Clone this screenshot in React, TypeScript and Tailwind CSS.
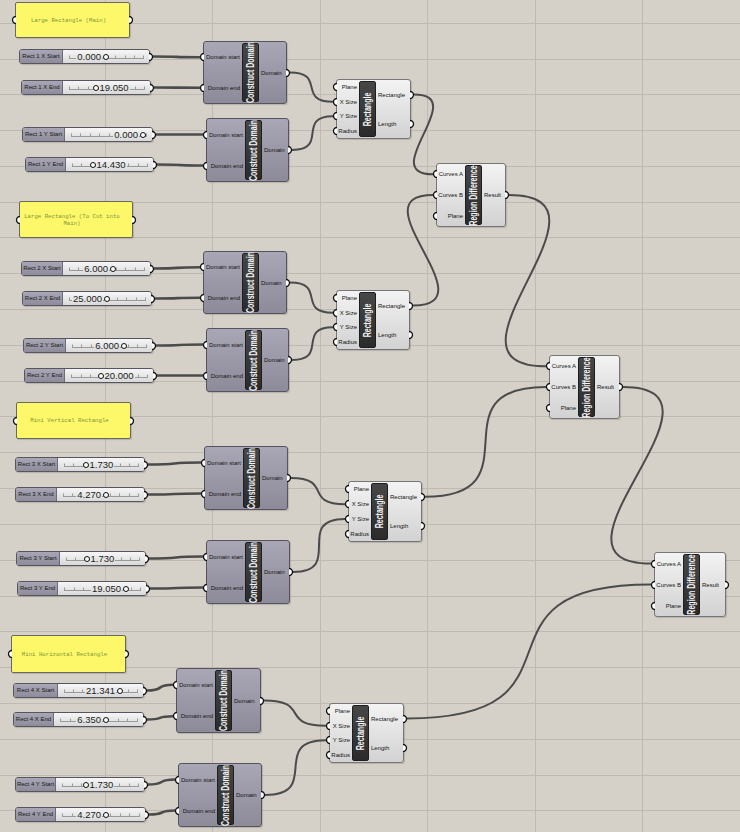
import { clsx } from "clsx"

type Kind = "cd" | "rect" | "rd"

type Comp = { id: string; kind: Kind; x: number; y: number; w: number; h: number }

type Slider = {
  id: string
  label: string
  value: string
  x: number
  y: number
  w: number
  lw: number
  knob: number
  side: "L" | "R"
}

type Panel = { x: number; y: number; w: number; h: number; lines: string[] }

const KINDS: Record<Kind, { name: string; inputs: string[]; outputs: string[]; inCol: string; body: string }> = {
  cd: {
    name: "Construct Domain",
    inputs: ["Domain start", "Domain end"],
    outputs: ["Domain"],
    inCol: "w-[38px]",
    body: "border-[#55535d] bg-gradient-to-b from-[#a9a7b5] to-[#8d8b99]",
  },
  rect: {
    name: "Rectangle",
    inputs: ["Plane", "X Size", "Y Size", "Radius"],
    outputs: ["Rectangle", "Length"],
    inCol: "w-[22px]",
    body: "border-[#767676] bg-gradient-to-b from-[#f3f3f3] to-[#d2d2d2]",
  },
  rd: {
    name: "Region Difference",
    inputs: ["Curves A", "Curves B", "Plane"],
    outputs: ["Result"],
    inCol: "w-[28px]",
    body: "border-[#767676] bg-gradient-to-b from-[#f3f3f3] to-[#d2d2d2]",
  },
}

const PANELS: Panel[] = [
  { x: 15, y: 2, w: 115, h: 36, lines: ["Large Rectangle (Main)"] },
  { x: 19, y: 201, w: 114, h: 37, lines: ["Large Rectangle (To Cut into", "Main)"] },
  { x: 16, y: 402, w: 115, h: 37, lines: ["Mini Vertical Rectangle"] },
  { x: 11, y: 635, w: 115, h: 38, lines: ["Mini Horizontal Rectangle"] },
]

const SLIDERS: Slider[] = [
  { id: "s1", label: "Rect 1 X Start", value: "0.000", x: 19, y: 49, w: 131, lw: 43, knob: 106, side: "L" },
  { id: "s2", label: "Rect 1 X End", value: "19.050", x: 21, y: 80, w: 130, lw: 41, knob: 96, side: "R" },
  { id: "s3", label: "Rect 1 Y Start", value: "0.000", x: 22, y: 127, w: 131, lw: 42, knob: 143, side: "L" },
  { id: "s4", label: "Rect 1 Y End", value: "14.430", x: 25, y: 157, w: 129, lw: 40, knob: 93, side: "R" },
  { id: "s5", label: "Rect 2 X Start", value: "6.000", x: 21, y: 261, w: 130, lw: 41, knob: 113, side: "L" },
  { id: "s6", label: "Rect 2 X End", value: "25.000", x: 22, y: 291, w: 130, lw: 40, knob: 107, side: "L" },
  { id: "s7", label: "Rect 2 Y Start", value: "6.000", x: 23, y: 338, w: 130, lw: 42, knob: 124, side: "L" },
  { id: "s8", label: "Rect 2 Y End", value: "20.000", x: 24, y: 368, w: 130, lw: 40, knob: 101, side: "R" },
  { id: "s9", label: "Rect 3 X Start", value: "1.730", x: 15, y: 457, w: 130, lw: 42, knob: 86, side: "R" },
  { id: "s10", label: "Rect 3 X End", value: "4.270", x: 15, y: 487, w: 130, lw: 41, knob: 106, side: "L" },
  { id: "s11", label: "Rect 3 Y Start", value: "1.730", x: 16, y: 551, w: 130, lw: 43, knob: 87, side: "R" },
  { id: "s12", label: "Rect 3 Y End", value: "19.050", x: 17, y: 581, w: 130, lw: 40, knob: 126, side: "L" },
  { id: "s13", label: "Rect 4 X Start", value: "21.341", x: 13, y: 683, w: 131, lw: 44, knob: 120, side: "L" },
  { id: "s14", label: "Rect 4 X End", value: "6.350", x: 13, y: 712, w: 131, lw: 40, knob: 106, side: "L" },
  { id: "s15", label: "Rect 4 Y Start", value: "1.730", x: 15, y: 777, w: 130, lw: 40, knob: 86, side: "R" },
  { id: "s16", label: "Rect 4 Y End", value: "4.270", x: 15, y: 807, w: 131, lw: 40, knob: 106, side: "L" },
]

const COMPS: Comp[] = [
  { id: "cd1", kind: "cd", x: 203, y: 41, w: 84, h: 63 },
  { id: "cd2", kind: "cd", x: 206, y: 118, w: 83, h: 64 },
  { id: "cd3", kind: "cd", x: 203, y: 251, w: 84, h: 63 },
  { id: "cd4", kind: "cd", x: 206, y: 328, w: 83, h: 64 },
  { id: "cd5", kind: "cd", x: 204, y: 446, w: 84, h: 64 },
  { id: "cd6", kind: "cd", x: 206, y: 540, w: 84, h: 64 },
  { id: "cd7", kind: "cd", x: 176, y: 668, w: 85, h: 65 },
  { id: "cd8", kind: "cd", x: 178, y: 763, w: 84, h: 64 },
  { id: "r1", kind: "rect", x: 336, y: 79, w: 75, h: 60 },
  { id: "r2", kind: "rect", x: 336, y: 290, w: 74, h: 60 },
  { id: "r3", kind: "rect", x: 348, y: 481, w: 74, h: 61 },
  { id: "r4", kind: "rect", x: 329, y: 703, w: 75, h: 60 },
  { id: "rd1", kind: "rd", x: 436, y: 163, w: 70, h: 64 },
  { id: "rd2", kind: "rd", x: 549, y: 355, w: 71, h: 64 },
  { id: "rd3", kind: "rd", x: 654, y: 552, w: 72, h: 65 },
]

// [from, outputIndex, to, inputIndex]
const LINKS: [string, number, string, number][] = [
  ["s1", 0, "cd1", 0], ["s2", 0, "cd1", 1], ["s3", 0, "cd2", 0], ["s4", 0, "cd2", 1],
  ["s5", 0, "cd3", 0], ["s6", 0, "cd3", 1], ["s7", 0, "cd4", 0], ["s8", 0, "cd4", 1],
  ["s9", 0, "cd5", 0], ["s10", 0, "cd5", 1], ["s11", 0, "cd6", 0], ["s12", 0, "cd6", 1],
  ["s13", 0, "cd7", 0], ["s14", 0, "cd7", 1], ["s15", 0, "cd8", 0], ["s16", 0, "cd8", 1],
  ["cd1", 0, "r1", 1], ["cd2", 0, "r1", 2], ["cd3", 0, "r2", 1], ["cd4", 0, "r2", 2],
  ["cd5", 0, "r3", 1], ["cd6", 0, "r3", 2], ["cd7", 0, "r4", 1], ["cd8", 0, "r4", 2],
  ["r1", 0, "rd1", 0], ["r2", 0, "rd1", 1], ["rd1", 0, "rd2", 0], ["r3", 0, "rd2", 1],
  ["rd2", 0, "rd3", 0], ["r4", 0, "rd3", 1],
]

const portY = (c: Comp, i: number, n: number) => c.y + 1 + ((c.h - 2) * (i + 0.5)) / n

function outPort(id: string) {
  const s = SLIDERS.find((v) => v.id === id)
  if (s) return { x: s.x + s.w + 3, y: s.y + 7.5 }
  return null
}

function wire(from: string, oi: number, to: string, ii: number) {
  const src = COMPS.find((c) => c.id === from)
  const dst = COMPS.find((c) => c.id === to)!
  const a = src
    ? { x: src.x + src.w + 3, y: portY(src, oi, KINDS[src.kind].outputs.length) }
    : outPort(from)!
  const b = { x: dst.x - 3, y: portY(dst, ii, KINDS[dst.kind].inputs.length) }
  const d = Math.hypot(b.x - a.x, b.y - a.y) * 0.7
  return {
    d: `M${a.x} ${a.y} C${a.x + d} ${a.y} ${b.x - d} ${b.y} ${b.x} ${b.y}`,
    thick: !src,
  }
}

// Grip semicircular a un lado del nodo.
function Grip({ side }: { side: "l" | "r" }) {
  return (
    <svg
      width="5"
      height="9"
      viewBox="0 0 5 9"
      className={clsx("absolute top-1/2 -translate-y-1/2", side === "r" ? "left-full" : "right-full")}
    >
      <path
        d={side === "r" ? "M0 1 A3.5 3.5 0 0 1 0 8" : "M5 1 A3.5 3.5 0 0 0 5 8"}
        fill="#fff"
        stroke="#111"
        strokeWidth="1.3"
      />
    </svg>
  )
}

function PanelNode({ p }: { p: Panel }) {
  return (
    <div
      className="absolute flex items-center justify-center rounded-[2px] border border-[#6a6a58] bg-[#fcf86a] shadow-[1px_1px_1px_rgba(0,0,0,0.15)]"
      style={{ left: p.x, top: p.y, width: p.w, height: p.h }}
    >
      <Grip side="l" />
      <Grip side="r" />
      <p className="whitespace-nowrap pr-[8px] text-center font-['Liberation_Mono',monospace] text-[5.7px] leading-[7px] text-[#7f9236]">
        {p.lines.map((l, i) => (
          <span key={i} className="block">
            {l}
          </span>
        ))}
      </p>
    </div>
  )
}

function SliderNode({ s }: { s: Slider }) {
  const vw = s.w - s.lw - 2
  const kr = s.knob - (s.x + 1 + s.lw)
  const ticks = Array.from({ length: 9 }, (_, i) => 6 + (i * (vw - 12)) / 8)
  return (
    <div
      className="absolute flex rounded-[3px] border border-[#57555f] shadow-[1px_1px_1px_rgba(0,0,0,0.15)]"
      style={{ left: s.x, top: s.y, width: s.w, height: 15 }}
    >
      <div
        className="flex items-center justify-center rounded-l-[2px] border-r border-[#6d6b76] bg-gradient-to-b from-[#a9a7b5] to-[#8e8c9a] text-[6px] text-[#161616]"
        style={{ width: s.lw }}
      >
        <span className="whitespace-nowrap">{s.label}</span>
      </div>
      <div className="relative flex-1 rounded-r-[2px] bg-gradient-to-b from-[#f6f6f6] to-[#d9d9d9]">
        <svg className="absolute inset-0" width={vw} height={13}>
          <line x1={ticks[0]} y1={8.5} x2={ticks[8]} y2={8.5} stroke="#9a9a9a" strokeWidth="1" />
          {ticks.map((t, i) => (
            <line key={i} x1={Math.round(t) + 0.5} y1={5.5} x2={Math.round(t) + 0.5} y2={9} stroke="#9a9a9a" strokeWidth="1" />
          ))}
        </svg>
        <span
          className="absolute top-0 flex h-full items-center bg-gradient-to-b from-[#f6f6f6] to-[#d9d9d9] px-[1px] text-[9.5px] leading-none text-[#1c1c1c]"
          style={s.side === "L" ? { right: vw - (kr - 4) } : { left: kr + 2.5 }}
        >
          {s.value}
        </span>
        <span
          className="absolute top-1/2 h-[6px] w-[6px] -translate-y-1/2 rounded-full border-[1.5px] border-[#111] bg-white"
          style={{ left: kr - 3 }}
        />
      </div>
      <Grip side="r" />
    </div>
  )
}

function CompNode({ c }: { c: Comp }) {
  const k = KINDS[c.kind]
  return (
    <div
      className={clsx(
        "absolute flex rounded-[3px] border text-[6px] leading-none text-[#141414] shadow-[1px_1px_1px_rgba(0,0,0,0.15)]",
        k.body,
      )}
      style={{ left: c.x, top: c.y, width: c.w, height: c.h }}
    >
      <div className={clsx("flex flex-col", k.inCol)}>
        {k.inputs.map((p) => (
          <div key={p} className="relative flex flex-1 items-center justify-end pr-[2px]">
            <Grip side="l" />
            <span className="whitespace-nowrap">{p}</span>
          </div>
        ))}
      </div>
      <div className="my-px flex w-[17px] items-center justify-center rounded-[2px] border border-[#1e1e1e] bg-gradient-to-b from-[#474747] to-[#2b2b2b]">
        <span className="-rotate-90 scale-x-[0.64] whitespace-nowrap text-[11px] font-bold text-[#f4f4f4]">{k.name}</span>
      </div>
      <div className="flex flex-1 flex-col">
        {k.outputs.map((p) => (
          <div key={p} className="relative flex flex-1 items-center pl-[2px]">
            <Grip side="r" />
            <span className="whitespace-nowrap">{p}</span>
          </div>
        ))}
      </div>
    </div>
  )
}

export default function App() {
  const vLines = Array.from({ length: 6 }, (_, i) => Math.round(105 + i * 107.4) + 0.5)
  const hLines = Array.from({ length: 23 }, (_, i) => Math.round(22.7 + i * 35.8) + 0.5)
  const wires = LINKS.map((l) => wire(...l))

  return (
    <div className="relative h-[832px] w-[740px] overflow-hidden bg-[#d5d1c9] font-['Liberation_Sans',Arial,sans-serif]">
      <svg className="absolute inset-0" width={740} height={832}>
        {vLines.map((x) => (
          <line key={`v${x}`} x1={x} y1={0} x2={x} y2={832} stroke="#bebab2" strokeWidth="1" />
        ))}
        {hLines.map((y) => (
          <line key={`h${y}`} x1={0} y1={y} x2={740} y2={y} stroke="#bebab2" strokeWidth="1" />
        ))}
      </svg>
      <svg className="absolute inset-0" width={740} height={832}>
        {wires.map((w, i) => (
          <path key={i} d={w.d} fill="none" stroke="#4b4b4b" strokeWidth={w.thick ? 2.6 : 2} />
        ))}
      </svg>
      {PANELS.map((p, i) => (
        <PanelNode key={i} p={p} />
      ))}
      {SLIDERS.map((s) => (
        <SliderNode key={s.id} s={s} />
      ))}
      {COMPS.map((c) => (
        <CompNode key={c.id} c={c} />
      ))}
    </div>
  )
}
